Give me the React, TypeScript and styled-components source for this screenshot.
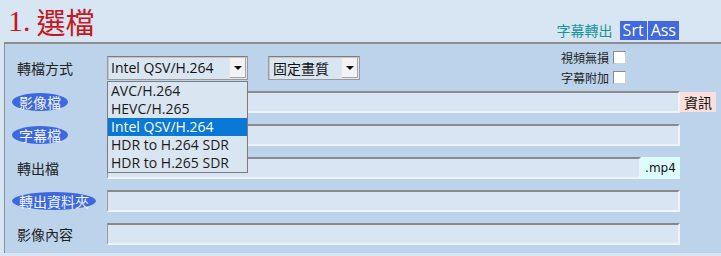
import React, { useState } from 'react';
import styled, { createGlobalStyle } from 'styled-components';

const CJK = `"Noto Sans CJK TC", "Noto Sans", sans-serif`;
const LATIN = `"Open Sans", "Noto Sans CJK TC", sans-serif`;

const GlobalStyle = createGlobalStyle`
  html, body {
    margin: 0;
    padding: 0;
    background: #d8e5f3;
  }
  body {
    font-family: ${CJK};
    color: #222;
  }
`;

const codecs = ['AVC/H.264', 'HEVC/H.265', 'Intel QSV/H.264', 'HDR to H.264 SDR', 'HDR to H.265 SDR'];

interface Row {
  label: string;
  pill?: boolean;
  addon?: 'info' | 'ext';
}

const rows: Row[] = [
  { label: '影像檔', pill: true, addon: 'info' },
  { label: '字幕檔', pill: true },
  { label: '轉出檔', addon: 'ext' },
  { label: '轉出資料夾', pill: true },
  { label: '影像內容' },
];

const App: React.FC = () => {
  const [codec, setCodec] = useState(2);

  return (
    <Page>
      <GlobalStyle />
      <Header>
        <Title>
          <TitleNum>1.</TitleNum>
          <span>選檔</span>
        </Title>
        <SubExport>
          <SubLabel>字幕轉出</SubLabel>
          <BlueButton>Srt</BlueButton>
          <BlueButton>Ass</BlueButton>
        </SubExport>
      </Header>
      <Panel>
        <TopRow>
          <PlainLabel>轉檔方式</PlainLabel>
          <SelectWrap>
            <FakeSelect $width={141}>
              <SelectText>{codecs[codec]}</SelectText>
              <Arrow />
            </FakeSelect>
            <DropList>
              {codecs.map((c, i) => (
                <DropItem key={c} $active={i === codec} onClick={() => setCodec(i)}>
                  {c}
                </DropItem>
              ))}
            </DropList>
          </SelectWrap>
          <FakeSelect $width={92} $cjk>
            <SelectText>固定畫質</SelectText>
            <Arrow />
          </FakeSelect>
          <Checks>
            <CheckRow>
              視頻無損 <Box />
            </CheckRow>
            <CheckRow>
              字幕附加 <Box />
            </CheckRow>
          </Checks>
        </TopRow>
        {rows.map((r) => (
          <FieldRow key={r.label}>
            <LabelCell>{r.pill ? <Pill>{r.label}</Pill> : <PlainLabel>{r.label}</PlainLabel>}</LabelCell>
            <InputWrap>
              <TextBox />
              {r.addon === 'ext' && <ExtTag>.mp4</ExtTag>}
            </InputWrap>
            {r.addon === 'info' ? <InfoButton>資訊</InfoButton> : <span />}
          </FieldRow>
        ))}
      </Panel>
    </Page>
  );
};

export default App;

const Page = styled.div`
  width: 721px;
  height: 256px;
  overflow: hidden;
`;

const Header = styled.div`
  height: 42px;
  display: flex;
  justify-content: space-between;
  align-items: flex-end;
  padding: 0 42px 0 8px;
`;

const Title = styled.div`
  align-self: flex-start;
  margin-top: 3px;
  color: #c8161d;
  font-size: 29px;
  line-height: 36px;
  display: flex;
  gap: 6px;
`;

const TitleNum = styled.span`
  font-family: 'Liberation Serif', serif;
  font-size: 30px;
`;

const SubExport = styled.div`
  display: flex;
  align-items: center;
  margin-bottom: 2px;
`;

const SubLabel = styled.span`
  color: #16959a;
  font-size: 14px;
  margin-right: 6px;
`;

const BlueButton = styled.span`
  background: #4169e1;
  color: #fff;
  font-family: ${LATIN};
  font-size: 16px;
  line-height: 19px;
  padding: 0 3px;
  margin-left: 1px;
`;

const Panel = styled.div`
  margin-left: 4px;
  height: 211px;
  box-sizing: border-box;
  background: #bcd3eb;
  border-top: 2px solid #8e8e8e;
  border-left: 1px solid #8e8e8e;
  padding: 8px 0 8px 7px;
  display: flex;
  flex-direction: column;
  gap: 11px;
`;

const TopRow = styled.div`
  display: flex;
  align-items: center;
  height: 31px;
  position: relative;
  margin-bottom: -3px;
`;

const PlainLabel = styled.span`
  font-size: 14px;
  padding-left: 5px;
  color: #222;
  width: 95px;
  display: inline-block;
  box-sizing: border-box;
`;

const SelectWrap = styled.div`
  position: relative;
  margin-right: 20px;
`;

const FakeSelect = styled.div<{ $width: number; $cjk?: boolean }>`
  width: ${(p) => p.$width}px;
  height: 24px;
  box-sizing: border-box;
  background: #dae5f2;
  border: 1px solid #9a9a9a;
  border-top-color: #7d7d7d;
  box-shadow: inset 1px 1px 0 #c4c4c4;
  display: flex;
  align-items: center;
  padding-left: ${(p) => (p.$cjk ? 4 : 3)}px;
  font-family: ${(p) => (p.$cjk ? CJK : LATIN)};
  font-size: 14px;
  color: #111;
`;

const SelectText = styled.span`
  flex: 1;
  white-space: nowrap;
`;

const Arrow = styled.span`
  width: 16px;
  height: 20px;
  margin-right: 1px;
  background: #f2f2f2;
  border-left: 1px solid #e6e6e6;
  box-shadow: inset -1px -1px 0 #a8a8a8;
  display: flex;
  align-items: center;
  justify-content: center;
  &::after {
    content: '';
    border-left: 4px solid transparent;
    border-right: 4px solid transparent;
    border-top: 4px solid #111;
  }
`;

const DropList = styled.div`
  position: absolute;
  left: 0;
  top: 25px;
  width: 141px;
  box-sizing: border-box;
  background: #dae5f2;
  border: 1px solid #7c7c7c;
  z-index: 5;
`;

const DropItem = styled.div<{ $active: boolean }>`
  height: 18px;
  line-height: 18px;
  padding-left: 3px;
  font-family: ${LATIN};
  font-size: 14px;
  white-space: nowrap;
  overflow: hidden;
  cursor: default;
  background: ${(p) => (p.$active ? '#0a78d6' : 'transparent')};
  color: ${(p) => (p.$active ? '#fff' : '#1a1a1a')};
`;

const Checks = styled.div`
  margin-left: auto;
  margin-right: 95px;
  display: flex;
  flex-direction: column;
  gap: 7px;
  align-items: flex-end;
`;

const CheckRow = styled.label`
  display: flex;
  align-items: center;
  gap: 4px;
  font-size: 12px;
  line-height: 12px;
  color: #222;
`;

const Box = styled.span`
  width: 11px;
  height: 11px;
  background: #fff;
  border: 1px solid #8a8a8a;
  border-right-color: #d0d0d0;
  border-bottom-color: #d0d0d0;
`;

const FieldRow = styled.div`
  display: grid;
  grid-template-columns: 95px 573px 36px;
  align-items: center;
  height: 22px;
`;

const LabelCell = styled.div`
  display: flex;
  align-items: center;
`;

const Pill = styled.span`
  background: #3e68df;
  color: #f0f4ff;
  font-size: 14px;
  line-height: 18px;
  padding: 0 7px;
  border-radius: 50%;
  white-space: nowrap;
`;

const InputWrap = styled.div`
  display: flex;
  height: 22px;
`;

const TextBox = styled.div`
  flex: 1;
  box-sizing: border-box;
  background: #d9e5f2;
  border-top: 2px solid #8a8a8a;
  border-left: 1px solid #9a9a9a;
  border-right: 2px solid #eef3f9;
  border-bottom: 2px solid #eef3f9;
`;

const ExtTag = styled.span`
  width: 39px;
  background: #dcfdfd;
  font-family: 'DejaVu Sans', sans-serif;
  font-size: 12px;
  line-height: 22px;
  text-align: center;
  color: #111;
`;

const InfoButton = styled.span`
  height: 20px;
  line-height: 20px;
  background: #fcdfdc;
  font-size: 14px;
  text-align: center;
  color: #111;
`;
